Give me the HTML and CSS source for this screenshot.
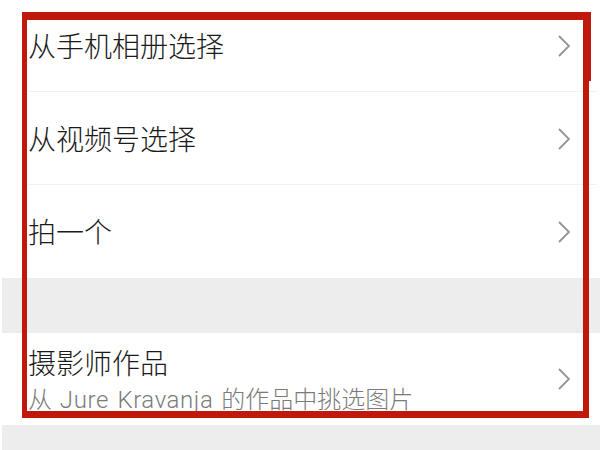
FILE: index.html
```html
<!DOCTYPE html>
<html lang="zh">
<head>
<meta charset="utf-8">
<link rel="stylesheet" href="styles.css">
</head>
<body>
<div class="page">
  <div class="list">
    <div class="row"><span class="title">从手机相册选择</span><svg class="chev" viewBox="0 0 12 22"><path d="M1 1 L11 11 L1 21" /></svg></div>
    <div class="row"><span class="title">从视频号选择</span><svg class="chev" viewBox="0 0 12 22"><path d="M1 1 L11 11 L1 21" /></svg></div>
    <div class="row last"><span class="title">拍一个</span><svg class="chev" viewBox="0 0 12 22"><path d="M1 1 L11 11 L1 21" /></svg></div>
  </div>
  <div class="gap"></div>
  <div class="list">
    <div class="row tall last">
      <div class="texts">
        <span class="title">摄影师作品</span>
        <span class="sub">从 <span class="latin">Jure Kravanja</span> 的作品中挑选图片</span>
      </div>
      <svg class="chev" viewBox="0 0 12 22"><path d="M1 1 L11 11 L1 21" /></svg>
    </div>
  </div>
  <div class="gap bottom"></div>
  <div class="mark"></div>
</div>
</body>
</html>
```
FILE: styles.css
```css
html, body {
  margin: 0;
  padding: 0;
  background: #ffffff;
}
.page {
  position: relative;
  width: 600px;
  height: 450px;
  overflow: hidden;
  font-family: "Roboto", "Noto Sans CJK SC", sans-serif;
  font-weight: 300;
  background: #ffffff;
}
.list {
  background: #ffffff;
}
.row {
  height: 92px;
  display: flex;
  align-items: center;
  justify-content: space-between;
  padding: 0 30px 0 28px;
  position: relative;
}
.row::after {
  content: "";
  position: absolute;
  left: 28px;
  right: 3px;
  bottom: 0;
  height: 1px;
  background: #f1f1f1;
}
.row.last::after {
  display: none;
}
.row + .row {
  height: 93px;
}
.title {
  font-size: 28px;
  line-height: 28px;
  padding-top: 4px;
  color: #1a1a1a;
}
.tall {
  height: 92px;
}
.texts {
  display: flex;
  flex-direction: column;
  gap: 9px;
  padding-top: 4px;
}
.texts .title {
  padding-top: 0;
}
.sub {
  font-size: 24px;
  line-height: 24px;
  word-spacing: 2px;
  color: #7b7b7b;
}
.latin {
  letter-spacing: 0.6px;
}
.chev {
  width: 12px;
  height: 22px;
  flex: none;
}
.chev path {
  fill: none;
  stroke: #959595;
  stroke-width: 1.9;
}
.gap {
  height: 55px;
  background: #ededed;
  margin-left: 2px;
}
.gap.bottom {
  height: 30px;
}
.mark {
  position: absolute;
  left: 22px;
  top: 12px;
  width: 556px;
  height: 391px;
  border-style: solid;
  border-color: #c0180d;
  border-width: 8px 6px 7px 5px;
}
.mark::before {
  content: "";
  position: absolute;
  right: -8px;
  top: -8px;
  width: 2px;
  height: 69px;
  background: #c0180d;
}
```
